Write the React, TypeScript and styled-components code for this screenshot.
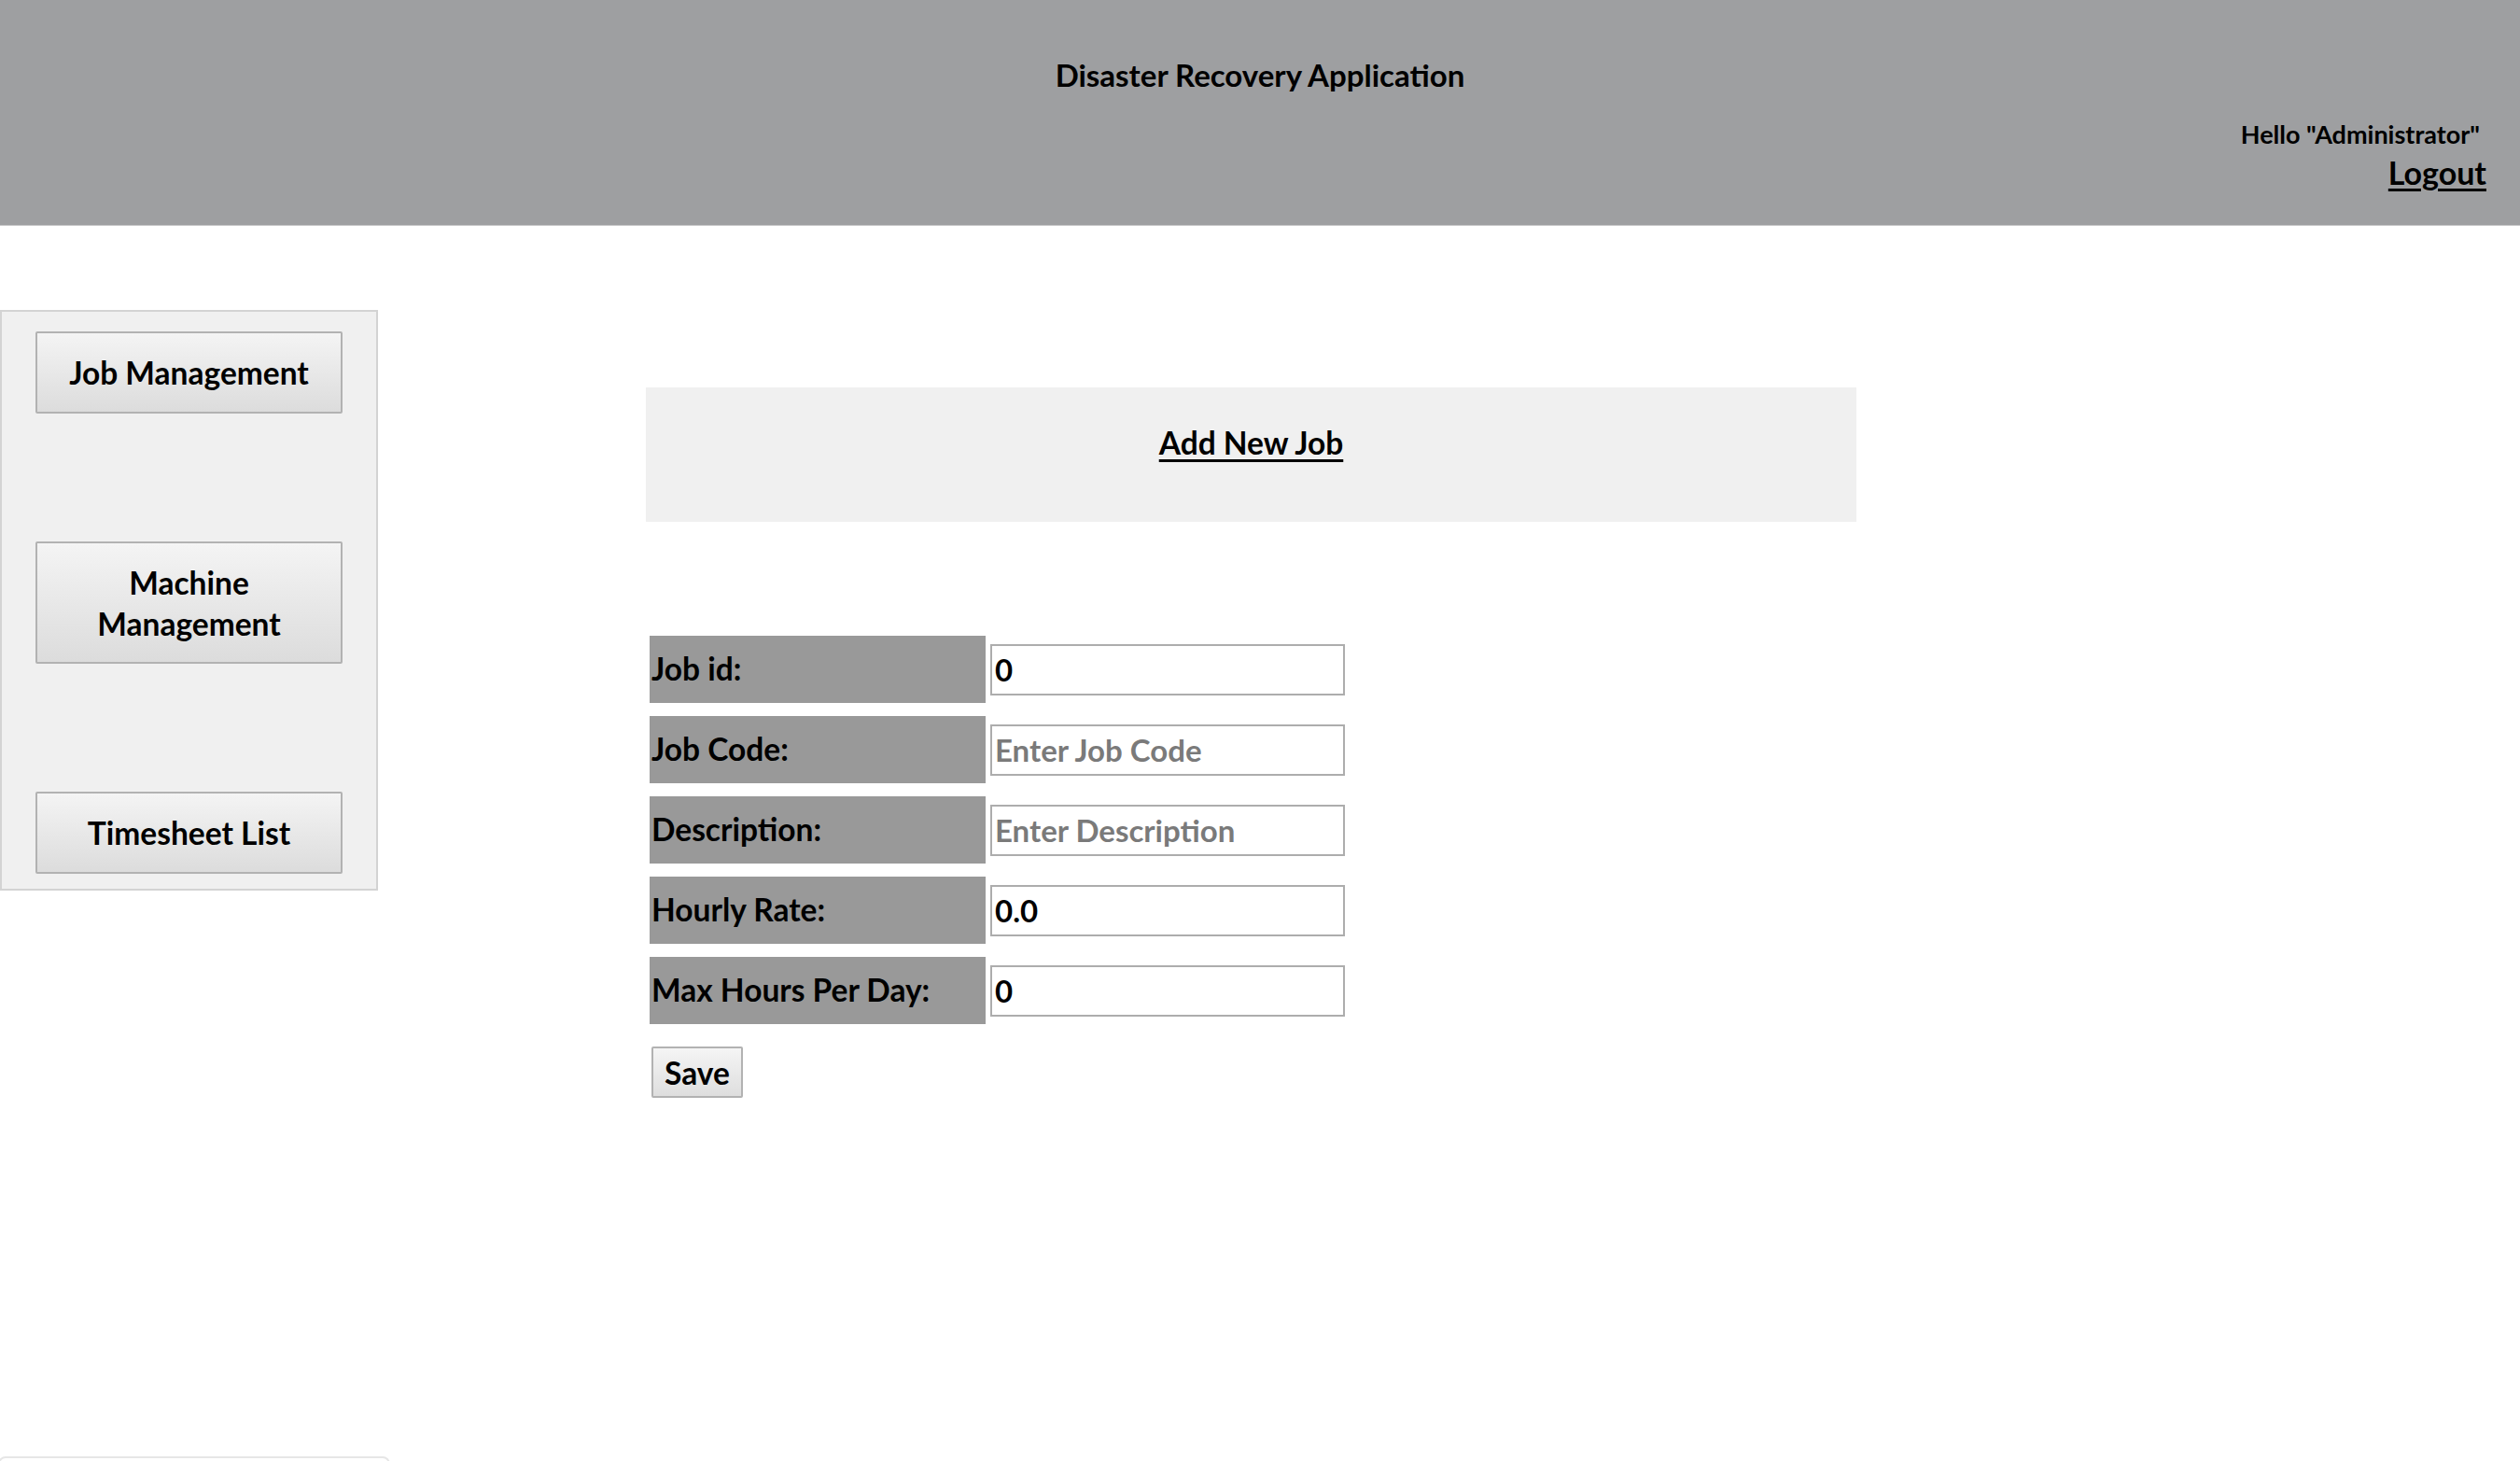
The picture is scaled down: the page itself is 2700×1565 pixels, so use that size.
import React from "react";
import styled, { createGlobalStyle } from "styled-components";

const GlobalStyle = createGlobalStyle`
  html, body {
    margin: 0;
    padding: 0;
    background: #ffffff;
    font-family: Lato, "Open Sans", "Liberation Sans", sans-serif;
    color: #000;
  }
  * { box-sizing: border-box; }
`;

const Page = styled.div`
  width: 2700px;
  min-height: 1565px;
  display: flex;
  flex-direction: column;
`;

const Header = styled.header`
  height: 242px;
  background: #9e9fa1;
  border-bottom: 1px solid #c9c9ca;
  display: flex;
  flex-direction: column;
  padding: 61px 36px 0 0;
`;

const Title = styled.h1`
  margin: 0;
  text-align: center;
  font-size: 33px;
  line-height: 38px;
  font-weight: 700;
  padding-left: 36px;
`;

const UserBox = styled.div`
  display: flex;
  flex-direction: column;
  align-items: flex-end;
  margin-top: 29px;
  gap: 6px;
`;

const Hello = styled.span`
  font-size: 27px;
  line-height: 32px;
  font-weight: 700;
  margin-right: 7px;
`;

const Logout = styled.a`
  font-size: 34px;
  line-height: 38px;
  font-weight: 700;
  color: #000;
  text-decoration: underline;
  text-underline-offset: 4px;
  text-decoration-thickness: 3px;
  cursor: pointer;
`;

const Body = styled.div`
  display: flex;
  align-items: flex-start;
`;

const Sidebar = styled.nav`
  margin-top: 90px;
  width: 405px;
  height: 622px;
  background: #f0f0f0;
  border: 2px solid #d3d3d3;
  display: flex;
  flex-direction: column;
  align-items: center;
  padding-top: 21px;
  gap: 137px;
`;

const NavButton = styled.button<{ $tall?: boolean }>`
  width: 329px;
  height: ${(p) => (p.$tall ? "131px" : "88px")};
  background: linear-gradient(#f4f4f4, #dcdcdc);
  border: 2px solid #b2b2b2;
  border-radius: 2px;
  font-family: Lato, "Open Sans", sans-serif;
  font-size: 33.5px;
  line-height: 44px;
  font-weight: 700;
  color: #000;
  padding: 0 20px;
  cursor: pointer;
`;

const Main = styled.main`
  margin-left: 287px;
  margin-top: 173px;
  display: flex;
  flex-direction: column;
`;

const Panel = styled.div`
  width: 1297px;
  height: 144px;
  background: #f0f0f0;
  display: flex;
  justify-content: center;
  padding-top: 39px;
`;

const PanelTitle = styled.a`
  font-size: 33.5px;
  line-height: 40px;
  font-weight: 700;
  color: #000;
  text-decoration: underline;
  text-underline-offset: 5px;
  text-decoration-thickness: 3px;
`;

const Form = styled.form`
  margin-top: 122px;
  margin-left: 4px;
  display: flex;
  flex-direction: column;
  align-items: flex-start;
`;

const Grid = styled.div`
  display: grid;
  grid-template-columns: 360px 380px;
  column-gap: 5px;
  row-gap: 14px;
  align-items: center;
`;

const Label = styled.label`
  height: 72px;
  background: #999999;
  display: flex;
  align-items: center;
  padding-left: 2px;
  padding-bottom: 2px;
  font-size: 33.5px;
  font-weight: 700;
`;

const Input = styled.input`
  width: 380px;
  height: 55px;
  border: 2px solid #adadad;
  background: #fff;
  padding: 0 3px;
  font-family: Lato, "Open Sans", sans-serif;
  font-size: 33px;
  font-weight: 700;
  color: #000;
  outline: none;
  &::placeholder {
    color: #7a7a7a;
    opacity: 1;
  }
`;

const SaveButton = styled.button`
  margin-top: 24px;
  margin-left: 2px;
  width: 98px;
  height: 55px;
  background: linear-gradient(#f5f5f5, #dedede);
  border: 2px solid #b2b2b2;
  border-radius: 2px;
  font-family: Lato, "Open Sans", sans-serif;
  font-size: 33.5px;
  font-weight: 700;
  color: #000;
  padding: 0;
  cursor: pointer;
`;

const FooterEdge = styled.div`
  position: fixed;
  left: -2px;
  bottom: -40px;
  width: 420px;
  height: 45px;
  border: 2px solid #e6e6e6;
  border-radius: 8px;
  background: #fff;
`;

const fields = [
  { label: "Job id:", value: "0" },
  { label: "Job Code:", placeholder: "Enter Job Code" },
  { label: "Description:", placeholder: "Enter Description" },
  { label: "Hourly Rate:", value: "0.0" },
  { label: "Max Hours Per Day:", value: "0" },
];

export default function App() {
  return (
    <Page>
      <GlobalStyle />
      <Header>
        <Title>Disaster Recovery Application</Title>
        <UserBox>
          <Hello>Hello "Administrator"</Hello>
          <Logout>Logout</Logout>
        </UserBox>
      </Header>
      <Body>
        <Sidebar>
          <NavButton>Job Management</NavButton>
          <NavButton $tall>Machine Management</NavButton>
          <NavButton>Timesheet List</NavButton>
        </Sidebar>
        <Main>
          <Panel>
            <PanelTitle>Add New Job</PanelTitle>
          </Panel>
          <Form onSubmit={(e) => e.preventDefault()}>
            <Grid>
              {fields.map((f) => (
                <React.Fragment key={f.label}>
                  <Label>{f.label}</Label>
                  <Input
                    defaultValue={f.value}
                    placeholder={f.placeholder}
                  />
                </React.Fragment>
              ))}
            </Grid>
            <SaveButton type="submit">Save</SaveButton>
          </Form>
        </Main>
      </Body>
      <FooterEdge />
    </Page>
  );
}
